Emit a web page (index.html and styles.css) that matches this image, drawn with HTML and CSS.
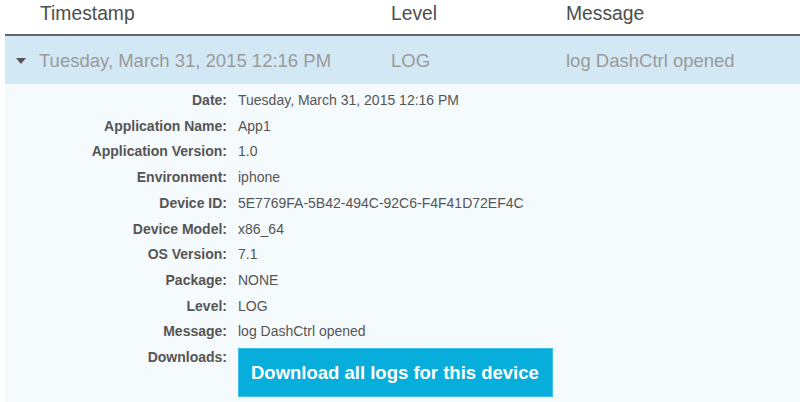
FILE: index.html
```html
<!DOCTYPE html>
<html>
<head>
<meta charset="utf-8">
<link rel="stylesheet" href="styles.css">
</head>
<body>
<div class="table">
  <div class="thead">
    <div class="th first">Timestamp</div>
    <div class="th">Level</div>
    <div class="th">Message</div>
  </div>
  <div class="row">
    <div class="cell first"><span class="caret"></span>Tuesday, March 31, 2015 12:16 PM</div>
    <div class="cell">LOG</div>
    <div class="cell">log DashCtrl opened</div>
  </div>
  <div class="detail">
    <div class="label">Date:</div><div class="value">Tuesday, March 31, 2015 12:16 PM</div>
    <div class="label">Application Name:</div><div class="value">App1</div>
    <div class="label">Application Version:</div><div class="value">1.0</div>
    <div class="label">Environment:</div><div class="value">iphone</div>
    <div class="label">Device ID:</div><div class="value">5E7769FA-5B42-494C-92C6-F4F41D72EF4C</div>
    <div class="label">Device Model:</div><div class="value">x86_64</div>
    <div class="label">OS Version:</div><div class="value">7.1</div>
    <div class="label">Package:</div><div class="value">NONE</div>
    <div class="label">Level:</div><div class="value">LOG</div>
    <div class="label">Message:</div><div class="value">log DashCtrl opened</div>
    <div class="label">Downloads:</div><div class="value"><button class="btn">Download all logs for this device</button></div>
  </div>
</div>
</body>
</html>
```

FILE: styles.css
```css
html, body {
  margin: 0;
  padding: 0;
  background: #ffffff;
  font-family: "Liberation Sans", Arial, sans-serif;
  overflow: hidden;
}
.table {
  padding-left: 5px;
  min-height: 100vh;
  display: flex;
  flex-direction: column;
}
.thead {
  display: grid;
  grid-template-columns: 386px 175px 1fr;
  height: 34px;
  flex: none;
  line-height: 28px;
  border-bottom: 2px solid #666666;
  font-size: 19.3px;
  color: #4d4d4d;
}
.th.first {
  padding-left: 35px;
}
.row {
  display: grid;
  grid-template-columns: 386px 175px 1fr;
  height: 48px;
  flex: none;
  background: #d2e8f4;
  font-size: 18.5px;
  color: #9a9a9a;
}
.cell {
  padding-top: 2px;
  line-height: 46px;
  white-space: nowrap;
}
.cell.first {
  display: flex;
  align-items: center;
  padding-left: 11px;
}
.caret {
  width: 0;
  height: 0;
  border-left: 5.5px solid transparent;
  border-right: 5.5px solid transparent;
  border-top: 6px solid #555555;
  margin-right: 13px;
  margin-top: -1px;
}
.detail {
  flex: 1;
  display: grid;
  grid-template-columns: 222px 1fr;
  grid-auto-rows: min-content;
  align-content: start;
  column-gap: 11px;
  background: #f5fafd;
  padding: 4px 0 0;
  font-size: 14px;
  line-height: 25.7px;
  color: #555555;
}
.label {
  text-align: right;
  font-weight: bold;
}
.value {
  white-space: nowrap;
}
.btn {
  display: block;
  margin-top: 3px;
  width: 315px;
  height: 49px;
  padding: 0 12px;
  background: #07aedb;
  border: 1px solid #3cc0e6;
  color: #ffffff;
  font-family: "Liberation Sans", Arial, sans-serif;
  font-weight: bold;
  font-size: 18.5px;
  text-align: left;
}
```
